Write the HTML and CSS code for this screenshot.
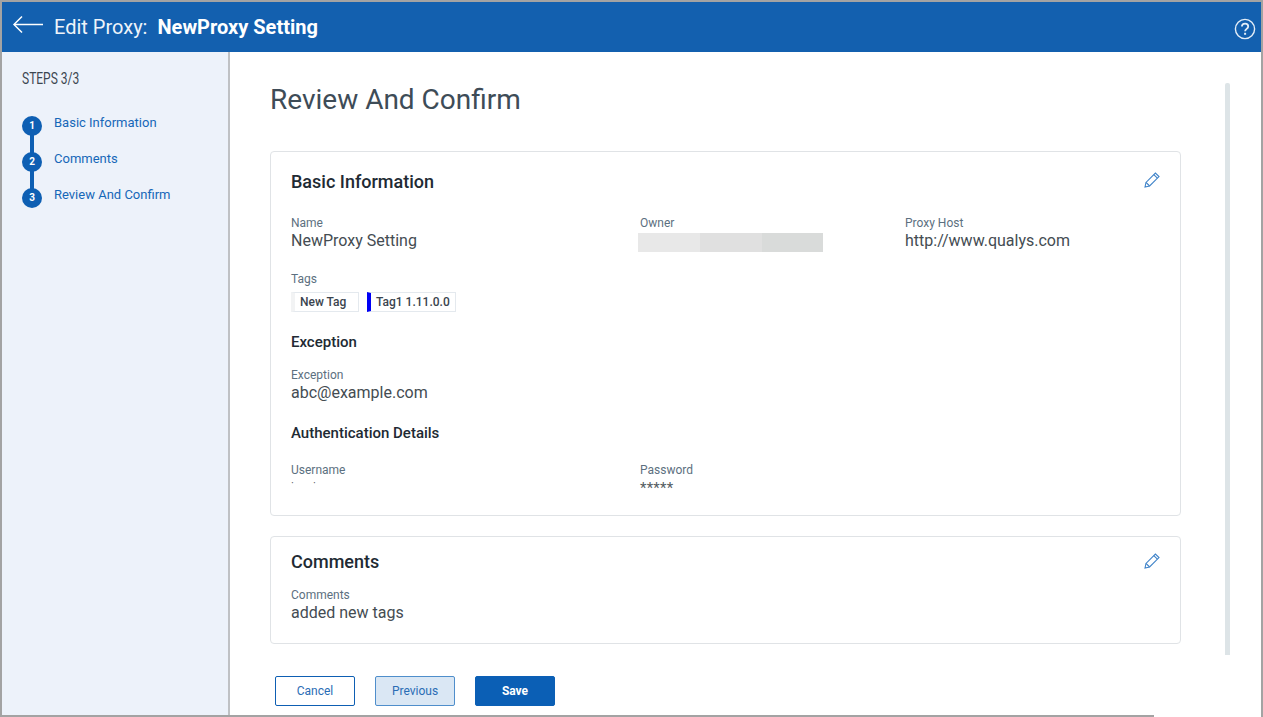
FILE: index.html
```html
<!DOCTYPE html>
<html lang="en">
<head>
  <meta charset="UTF-8" />
  <meta name="viewport" content="width=device-width, initial-scale=1.0"/>
  <title>Edit Proxy</title>
  <link rel="stylesheet" href="styles.css">
</head>
<body>
  <div class="app-window">
    <div class="app-header">
      <svg class="back-icon" width="32" height="20" viewBox="0 0 32 20" fill="none" stroke="#fff" stroke-width="1.5">
        <path d="M31 9.5H2"/>
        <path d="M10 1.5L2 9.5l8 8"/>
      </svg>
      <span class="header-label">Edit Proxy:</span>
      <span class="header-name">NewProxy Setting</span>
      <svg class="help-icon" width="22" height="22" viewBox="0 0 22 22" fill="none" stroke="#e3edf7" stroke-width="1.4">
        <circle cx="11" cy="11" r="9.6"/>
        <path d="M7.9 8.6c0-1.8 1.4-3 3.2-3s3.1 1.1 3.1 2.8c0 2.5-3.1 2.5-3.1 4.9" stroke-width="1.8"/>
        <path d="M11.1 14.8v2" stroke-width="2"/>
      </svg>
    </div>

    <div class="app-body">
      <div class="sidebar">
        <div class="steps-title">STEPS 3/3</div>
        <div class="steps">
          <div class="step"><span class="step-num">1</span><span class="step-name">Basic Information</span></div>
          <div class="step"><span class="step-num">2</span><span class="step-name">Comments</span></div>
          <div class="step"><span class="step-num">3</span><span class="step-name">Review And Confirm</span></div>
        </div>
      </div>

      <div class="content">
        <div class="scroll-thumb"></div>
        <h1 class="page-title">Review And Confirm</h1>

        <div class="card card-basic">
          <svg class="edit-icon" width="16" height="16" viewBox="0 0 16 16" fill="none" stroke="#3f83c9" stroke-width="1.1">
            <path d="M1 15l1-4.6L11.4 1 15 4.6 5.6 14z"/>
            <path d="M2 10.4L5.6 14M9.8 2.6l3.6 3.6"/>
          </svg>
          <h2 class="card-title">Basic Information</h2>

          <div class="field-row field-row-top">
            <div class="field col-a">
              <div class="field-label">Name</div>
              <div class="field-value value-low">NewProxy Setting</div>
            </div>
            <div class="field col-b">
              <div class="field-label">Owner</div>
              <div class="masked">
                <span class="mask-1"></span><span class="mask-2"></span><span class="mask-3"></span>
              </div>
            </div>
            <div class="field">
              <div class="field-label">Proxy Host</div>
              <div class="field-value value-low">http://www.qualys.com</div>
            </div>
          </div>

          <div class="field field-tags">
            <div class="field-label">Tags</div>
            <div class="tags">
              <span class="tag tag-plain">New Tag</span>
              <span class="tag tag-blue">Tag1 1.11.0.0</span>
            </div>
          </div>

          <h3 class="sub-title sub-exception">Exception</h3>
          <div class="field field-exception">
            <div class="field-label">Exception</div>
            <div class="field-value value-low">abc@example.com</div>
          </div>

          <h3 class="sub-title sub-auth">Authentication Details</h3>
          <div class="field-row field-row-auth">
            <div class="field col-a">
              <div class="field-label">Username</div>
              <div class="clipped">·&nbsp;&nbsp;&nbsp;&nbsp;&nbsp;&nbsp;&nbsp;·</div>
            </div>
            <div class="field">
              <div class="field-label">Password</div>
              <div class="stars">*****</div>
            </div>
          </div>
        </div>

        <div class="card card-comments">
          <svg class="edit-icon" width="16" height="16" viewBox="0 0 16 16" fill="none" stroke="#3f83c9" stroke-width="1.1">
            <path d="M1 15l1-4.6L11.4 1 15 4.6 5.6 14z"/>
            <path d="M2 10.4L5.6 14M9.8 2.6l3.6 3.6"/>
          </svg>
          <h2 class="card-title">Comments</h2>
          <div class="field field-comment">
            <div class="field-label">Comments</div>
            <div class="field-value value-low">added new tags</div>
          </div>
        </div>

        <div class="actions">
          <button class="btn btn-cancel">Cancel</button>
          <button class="btn btn-prev">Previous</button>
          <button class="btn btn-save">Save</button>
        </div>
      </div>
    </div>
    <div class="bottom-edge"></div>
  </div>
</body>
</html>
```

FILE: styles.css
```css
* {
  box-sizing: border-box;
}

html, body {
  margin: 0;
  padding: 0;
  background-color: #fff;
}

body {
  font-family: Roboto, "Liberation Sans", sans-serif;
  overflow: hidden;
}

.app-window {
  position: relative;
  width: 1263px;
  height: 717px;
  border-top: 2px solid #a3a3a3;
  border-left: 2px solid #a3a3a3;
  border-right: 2px solid #a3a3a3;
  overflow: hidden;
}

.app-header {
  display: flex;
  align-items: center;
  height: 50px;
  padding: 0 5px 0 10px;
  background-color: #1360af;
  color: #fff;
}

.back-icon {
  margin-top: -5px;
  margin-right: 10px;
}

.header-label {
  font-size: 20px;
  color: #eef4fa;
  margin-right: 10px;
}

.header-name {
  font-size: 20px;
  font-weight: 700;
}

.help-icon {
  margin-left: auto;
  margin-top: 3px;
}

.app-body {
  display: flex;
  height: 665px;
}

.sidebar {
  width: 228px;
  flex-shrink: 0;
  padding: 18px 0 0 20px;
  background-color: #edf2fa;
  border-right: 2px solid #c9cbce;
  border-image: linear-gradient(to right, #dfe3e8, #bfc1c4) 1;
}

.steps-title {
  font-size: 16px;
  line-height: 18px;
  color: #3c4650;
  transform: scaleX(0.75);
  transform-origin: left;
}

.steps {
  margin-top: 27px;
}

.step {
  position: relative;
  display: flex;
  height: 36px;
}

.step:not(:last-child)::after {
  content: "";
  position: absolute;
  left: 8px;
  top: 15px;
  width: 4px;
  height: 30px;
  background-color: #0e5fb3;
}

.step-num {
  position: relative;
  z-index: 1;
  width: 20px;
  height: 20px;
  margin-top: 1px;
  border-radius: 50%;
  background-color: #0e5fb3;
  color: #fff;
  font-size: 10px;
  font-weight: 700;
  line-height: 20px;
  text-align: center;
}

.step-name {
  margin-left: 12px;
  font-size: 13px;
  line-height: 16px;
  color: #1667b8;
}

.content {
  position: relative;
  flex: 1;
  padding: 30px 0 0 40px;
}

.scroll-thumb {
  position: absolute;
  left: 995px;
  top: 31px;
  width: 5px;
  height: 572px;
  border-radius: 2px 2px 0 0;
  background-color: #dde4e7;
}

.page-title {
  margin: 0;
  font-size: 28px;
  font-weight: 400;
  line-height: 36px;
  color: #3e4c57;
}

.card {
  position: relative;
  width: 911px;
  padding: 0 20px;
  border: 1px solid #e0e3e6;
  border-radius: 4px;
}

.card-basic {
  height: 365px;
  margin-top: 33px;
}

.card-comments {
  height: 108px;
  margin-top: 20px;
}

.edit-icon {
  position: absolute;
  right: 20px;
  top: 20px;
}

.card-comments .edit-icon {
  top: 16px;
}

.card-title {
  margin: 20px 0 0;
  font-size: 18px;
  font-weight: 500;
  line-height: 20px;
  color: #212a33;
}

.card-comments .card-title {
  margin-top: 15px;
}

.field-row {
  display: flex;
}

.field-row-top {
  margin-top: 24px;
}

.field-row-auth {
  margin-top: 20px;
}

.col-a {
  width: 349px;
}

.col-b {
  width: 265px;
}

.field-label {
  font-size: 12px;
  line-height: 14px;
  color: #5c7080;
}

.field-value {
  font-size: 16px;
  line-height: 20px;
  color: #444c52;
}

.value-low {
  margin-top: 1px;
}

.masked {
  display: flex;
  height: 19px;
  margin: 3px 0 0 -2px;
}

.mask-1 {
  width: 62px;
  background-color: #e8e8e8;
}

.mask-2 {
  width: 62px;
  background-color: #e0e0e0;
}

.mask-3 {
  width: 61px;
  background-color: #d9dbda;
}

.field-tags {
  margin-top: 20px;
}

.tags {
  display: flex;
  gap: 8px;
  margin-top: 6px;
}

.tag {
  height: 20px;
  padding: 0 5px;
  border: 1px solid #e4e9ee;
  font-size: 12px;
  font-weight: 500;
  line-height: 18px;
  color: #3a444e;
}

.tag-plain {
  width: 68px;
  border-left: 4px solid #f2f3f4;
}

.tag-blue {
  border-left: 4px solid #0000f5;
}

.sub-title {
  margin: 0;
  font-size: 15px;
  font-weight: 500;
  line-height: 20px;
  color: #212a33;
}

.sub-exception {
  margin-top: 20px;
}

.field-exception {
  margin-top: 16px;
}

.sub-auth {
  margin-top: 20px;
}

.clipped {
  height: 14px;
  margin-top: 2px;
  font-size: 11px;
  line-height: 10px;
  color: #555;
}

.stars {
  margin-top: 2px;
  font-size: 15px;
  line-height: 18px;
  color: #555c62;
  letter-spacing: 0.2px;
}

.field-comment {
  margin-top: 16px;
}

.actions {
  display: flex;
  gap: 20px;
  margin: 32px 0 0 5px;
}

.btn {
  width: 80px;
  height: 30px;
  border-radius: 2px;
  font-family: inherit;
  font-size: 12px;
  padding: 0;
}

.btn-cancel {
  background-color: #fff;
  border: 1px solid #0e5fb3;
  color: #2a6db5;
}

.btn-prev {
  background-color: #dae7f4;
  border: 1px solid #4f8ecb;
  color: #2a6db5;
}

.btn-save {
  background-color: #0b5fb5;
  border: 1px solid #0b5fb5;
  color: #fff;
  font-weight: 700;
}

.bottom-edge {
  position: absolute;
  left: -2px;
  bottom: 0;
  width: 1154px;
  height: 2px;
  background-color: #a3a3a3;
}
```
